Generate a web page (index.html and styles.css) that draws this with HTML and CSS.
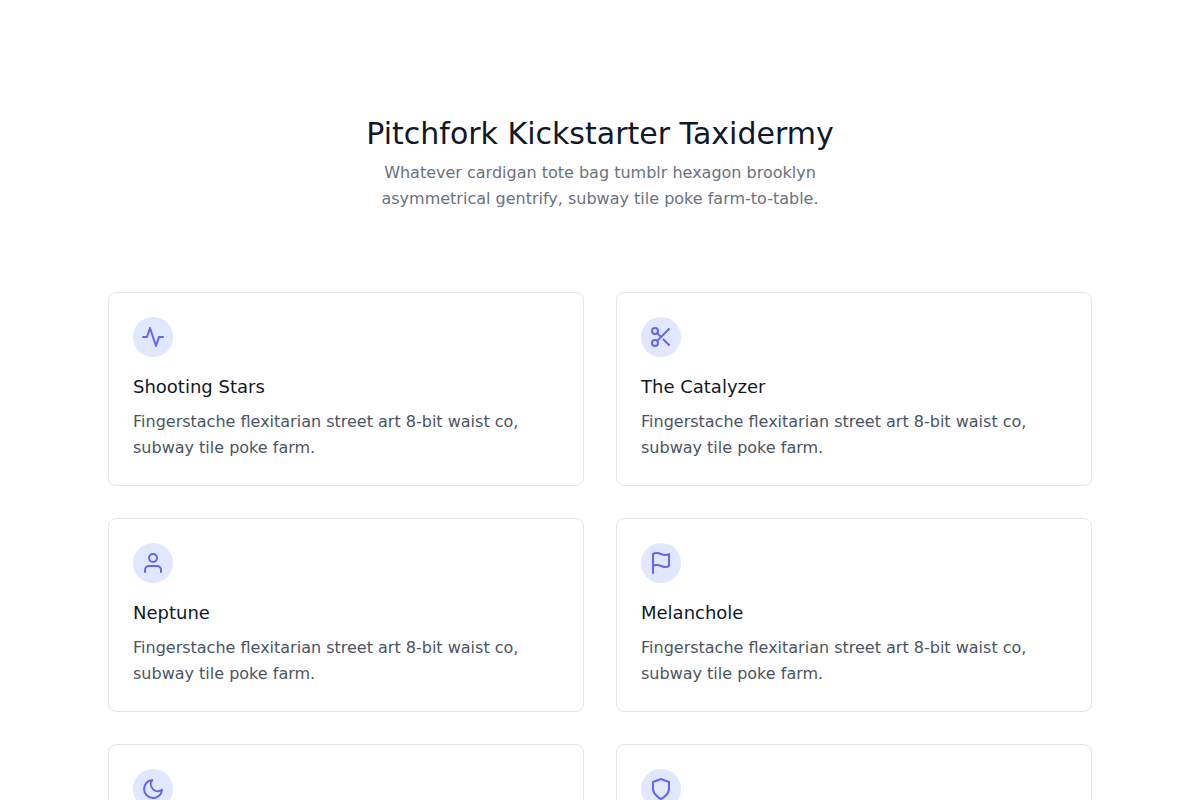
FILE: index.html
```html
<!DOCTYPE html>
<html lang="en">
<head>
    <meta charset="UTF-8">
    <meta name="viewport" content="width=device-width, initial-scale=1.0">
    <title>Pitchfork Kickstarter Taxidermy</title>
    <link rel="stylesheet" href="styles.css">
</head>
<body>
    <section class="container">
        <header class="intro">
            <h1>Pitchfork Kickstarter Taxidermy</h1>
            <p>Whatever cardigan tote bag tumblr hexagon brooklyn<br>asymmetrical gentrify, subway tile poke farm-to-table.</p>
        </header>

        <div class="cards">
            <div class="card">
                <div class="icon">
                    <svg viewBox="0 0 24 24"><polyline points="22 12 18 12 15 21 9 3 6 12 2 12"/></svg>
                </div>
                <h2>Shooting Stars</h2>
                <p>Fingerstache flexitarian street art 8-bit waist co, subway tile poke farm.</p>
            </div>
            <div class="card">
                <div class="icon">
                    <svg viewBox="0 0 24 24"><circle cx="6" cy="6" r="3"/><circle cx="6" cy="18" r="3"/><line x1="20" y1="4" x2="8.12" y2="15.88"/><line x1="14.47" y1="14.48" x2="20" y2="20"/><line x1="8.12" y1="8.12" x2="12" y2="12"/></svg>
                </div>
                <h2>The Catalyzer</h2>
                <p>Fingerstache flexitarian street art 8-bit waist co, subway tile poke farm.</p>
            </div>
            <div class="card">
                <div class="icon">
                    <svg viewBox="0 0 24 24"><path d="M20 21v-2a4 4 0 0 0-4-4H8a4 4 0 0 0-4 4v2"/><circle cx="12" cy="7" r="4"/></svg>
                </div>
                <h2>Neptune</h2>
                <p>Fingerstache flexitarian street art 8-bit waist co, subway tile poke farm.</p>
            </div>
            <div class="card">
                <div class="icon">
                    <svg viewBox="0 0 24 24"><path d="M4 15s1-1 4-1 5 2 8 2 4-1 4-1V3s-1 1-4 1-5-2-8-2-4 1-4 1z"/><line x1="4" y1="22" x2="4" y2="15"/></svg>
                </div>
                <h2>Melanchole</h2>
                <p>Fingerstache flexitarian street art 8-bit waist co, subway tile poke farm.</p>
            </div>
            <div class="card">
                <div class="icon">
                    <svg viewBox="0 0 24 24"><path d="M21 12.79A9 9 0 1 1 11.21 3 7 7 0 0 0 21 12.79z"/></svg>
                </div>
                <h2>Bunker</h2>
                <p>Fingerstache flexitarian street art 8-bit waist co, subway tile poke farm.</p>
            </div>
            <div class="card">
                <div class="icon">
                    <svg viewBox="0 0 24 24"><path d="M12 22s8-4 8-10V5l-8-3-8 3v7c0 6 8 10 8 10z"/></svg>
                </div>
                <h2>Ramona Falls</h2>
                <p>Fingerstache flexitarian street art 8-bit waist co, subway tile poke farm.</p>
            </div>
        </div>
    </section>
</body>
</html>
```
FILE: styles.css
```css
* {
    margin: 0;
    padding: 0;
    box-sizing: border-box;
}

body {
    background-color: white;
    font-family: "DejaVu Sans", sans-serif;
}

.container {
    width: 984px;
    margin: 0 auto;
    padding: 116px 0 96px;
}

.intro {
    text-align: center;
    margin-bottom: 80px;
}

.intro h1 {
    font-size: 30px;
    line-height: 36px;
    font-weight: 400;
    color: #111827;
    margin-bottom: 8px;
}

.intro p {
    font-size: 16px;
    line-height: 26px;
    color: #6b7280;
}

.cards {
    display: grid;
    grid-template-columns: 1fr 1fr;
    gap: 32px;
}

.card {
    background-color: white;
    border: 1px solid #e5e7eb;
    border-radius: 8px;
    padding: 24px;
}

.icon {
    width: 40px;
    height: 40px;
    border-radius: 50%;
    background-color: #e0e7ff;
    display: flex;
    justify-content: center;
    align-items: center;
    margin-bottom: 16px;
}

.icon svg {
    width: 24px;
    height: 24px;
    fill: none;
    stroke: #6366f1;
    stroke-width: 2;
    stroke-linecap: round;
    stroke-linejoin: round;
}

.card h2 {
    font-size: 18px;
    line-height: 28px;
    font-weight: 400;
    color: #111827;
    margin-bottom: 8px;
}

.card p {
    font-size: 16px;
    line-height: 26px;
    color: #4b5563;
}
```
